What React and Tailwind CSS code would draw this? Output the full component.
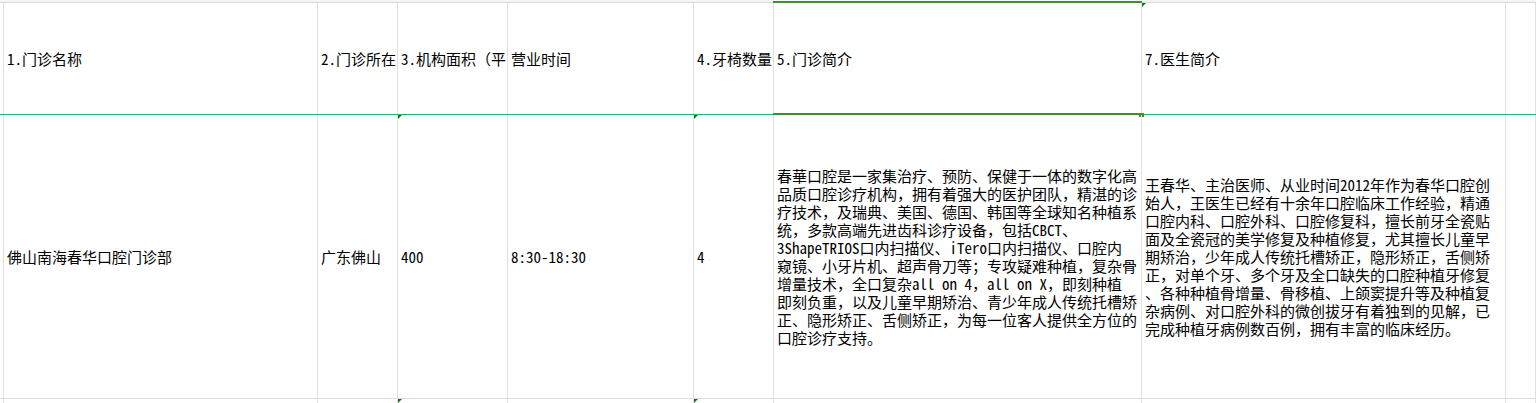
import React from "react";

const FONT = {
  fontFamily: '"Noto Sans Mono CJK SC", "Noto Sans CJK SC", "Liberation Sans", sans-serif',
};

const COLS = "grid grid-cols-[4px_314px_80px_110px_186px_80px_368px_364px_1fr]";

const intro = [
  "春華口腔是一家集治疗、预防、保健于一体的数字化高",
  "品质口腔诊疗机构，拥有着强大的医护团队，精湛的诊",
  "疗技术，及瑞典、美国、德国、韩国等全球知名种植系",
  "统，多款高端先进齿科诊疗设备，包括CBCT、",
  "3ShapeTRIOS口内扫描仪、iTero口内扫描仪、口腔内",
  "窥镜、小牙片机、超声骨刀等；专攻疑难种植，复杂骨",
  "增量技术，全口复杂all on 4，all on X，即刻种植",
  "即刻负重，以及儿童早期矫治、青少年成人传统托槽矫",
  "正、隐形矫正、舌侧矫正，为每一位客人提供全方位的",
  "口腔诊疗支持。",
];

const doctor = [
  "王春华、主治医师、从业时间2012年作为春华口腔创",
  "始人，王医生已经有十余年口腔临床工作经验，精通",
  "口腔内科、口腔外科、口腔修复科，擅长前牙全瓷贴",
  "面及全瓷冠的美学修复及种植修复，尤其擅长儿童早",
  "期矫治，少年成人传统托槽矫正，隐形矫正，舌侧矫",
  "正，对单个牙、多个牙及全口缺失的口腔种植牙修复",
  "、各种种植骨增量、骨移植、上颌窦提升等及种植复",
  "杂病例、对口腔外科的微创拔牙有着独到的见解，已",
  "完成种植牙病例数百例，拥有丰富的临床经历。",
];

function Tri() {
  return (
    <span className="absolute left-[-1px] top-0 h-0 w-0 border-t-[5px] border-r-[5px] border-t-[#0b7d0b] border-r-transparent" />
  );
}

function Cell({ children, tri = false, className = "" }) {
  return (
    <div
      className={`relative flex items-center overflow-hidden whitespace-nowrap border-r border-[#e1e1e1] pl-[3px] ${className}`}
    >
      {tri && <Tri />}
      {children}
    </div>
  );
}

export default function App() {
  return (
    <div
      className="h-[403px] w-[1536px] overflow-hidden bg-white text-[15px] leading-[18px] text-black"
      style={FONT}
    >
      <div className="h-[2px] bg-[#f4f4f4]" />
      <div className="h-px bg-[#dadada]" />

      {/* Header row */}
      <div className={`${COLS} h-[112px] border-b border-[#22b574]`}>
        <Cell />
        <Cell>1.门诊名称</Cell>
        <Cell>2.门诊所在</Cell>
        <Cell>3.机构面积（平</Cell>
        <Cell>营业时间</Cell>
        <Cell>4.牙椅数量</Cell>
        <div className="relative flex items-center border-r border-[#e1e1e1] pl-[3px] whitespace-nowrap">
          5.门诊简介
          <span className="absolute left-[-1px] right-[-1px] top-[-2px] h-[114px] border-t-2 border-b-2 border-[#3f8f2c]" />
          <span className="absolute right-[-3px] top-[110px] h-[4px] w-[5px] bg-[#3f8f2c]" />
        </div>
        <Cell tri>7.医生简介</Cell>
        <Cell />
      </div>

      {/* Data row */}
      <div className={`${COLS} h-[284px] border-b border-[#dcdcdc]`}>
        <Cell />
        <Cell>佛山南海春华口腔门诊部</Cell>
        <Cell>广东佛山</Cell>
        <Cell tri>400</Cell>
        <Cell>8:30-18:30</Cell>
        <Cell tri>4</Cell>
        <Cell>
          <div className="flex flex-col">
            {intro.map((l, i) => (
              <div key={i}>{l}</div>
            ))}
          </div>
        </Cell>
        <Cell>
          <div className="flex flex-col">
            {doctor.map((l, i) => (
              <div key={i}>{l}</div>
            ))}
          </div>
        </Cell>
        <Cell />
      </div>

      {/* Next row (partially visible) */}
      <div className={`${COLS} h-[20px]`}>
        <Cell />
        <Cell />
        <Cell />
        <Cell tri />
        <Cell />
        <Cell tri />
        <Cell />
        <Cell />
        <Cell />
      </div>
    </div>
  );
}
